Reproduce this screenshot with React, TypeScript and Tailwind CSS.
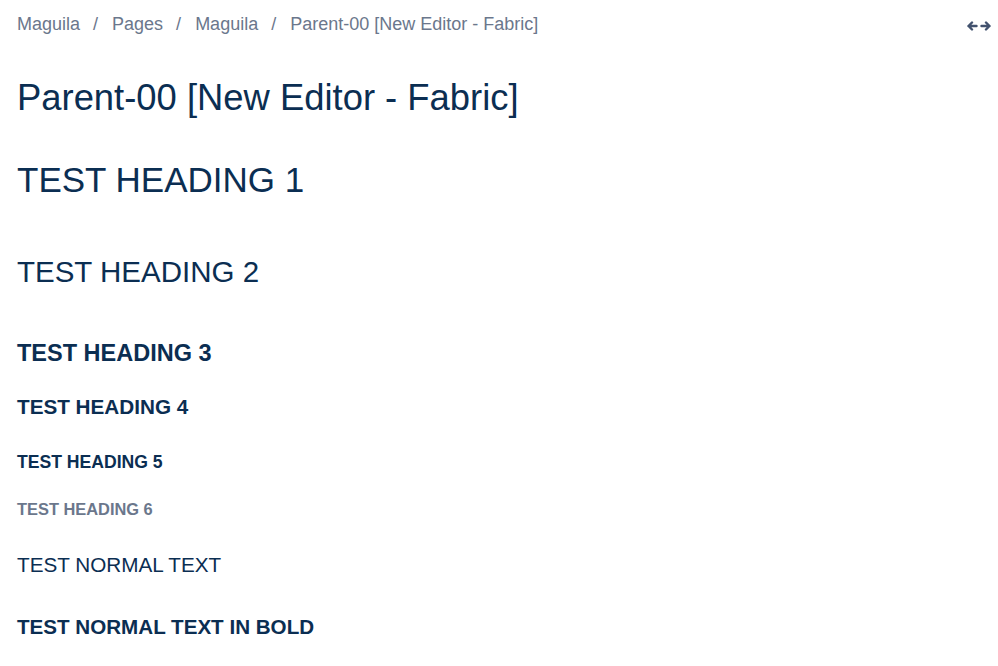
export default function App() {
  const crumbs = ['Maguila', 'Pages', 'Maguila', 'Parent-00 [New Editor - Fabric]'];

  return (
    <div className="min-h-[666px] bg-white font-['Liberation_Sans',Arial,sans-serif] text-[#0b2e52]">
      <div className="pl-[17px] pr-[7px] pt-[15px]">
        <div className="flex items-center justify-between">
          <nav className="flex text-[18px] leading-[18px] text-[#6b778c]">
            {crumbs.map((crumb, index) => (
              <span key={index} className="flex">
                {index > 0 && <span className="pl-[13px] pr-[14px]">/</span>}
                <span>{crumb}</span>
              </span>
            ))}
          </nav>
          <svg width="24" height="12" viewBox="0 0 24 12" className="mt-[4px]" fill="none" stroke="#42526e" strokeWidth="2.4" strokeLinecap="round" strokeLinejoin="round">
            <path d="M1.5 6 L5 2.5 M1.5 6 L5 9.5 M1.5 6 H9.5" />
            <path d="M22.5 6 L19 2.5 M22.5 6 L19 9.5 M22.5 6 H14.5" />
          </svg>
        </div>

        <h1 className="mt-[47px] text-[36.4px] leading-[36px]">Parent-00 [New Editor - Fabric]</h1>

        <h2 className="mt-[46px] text-[35px] leading-[35px]">TEST HEADING 1</h2>
        <h3 className="mt-[60px] text-[29.5px] leading-[29px]">TEST HEADING 2</h3>
        <h4 className="mt-[55px] text-[23.5px] leading-[24px] font-bold">TEST HEADING 3</h4>
        <h5 className="mt-[32px] text-[20.7px] leading-[20px] font-bold">TEST HEADING 4</h5>
        <h6 className="mt-[36px] text-[17.6px] leading-[18px] font-bold">TEST HEADING 5</h6>
        <div className="mt-[30px] text-[16.4px] leading-[16px] font-bold text-[#6b778c]">TEST HEADING 6</div>

        <p className="mt-[38px] text-[20.7px] leading-[20px]">TEST NORMAL TEXT</p>
        <p className="mt-[42px] text-[20.6px] leading-[20px] font-bold">TEST NORMAL TEXT IN BOLD</p>
      </div>
    </div>
  );
}
